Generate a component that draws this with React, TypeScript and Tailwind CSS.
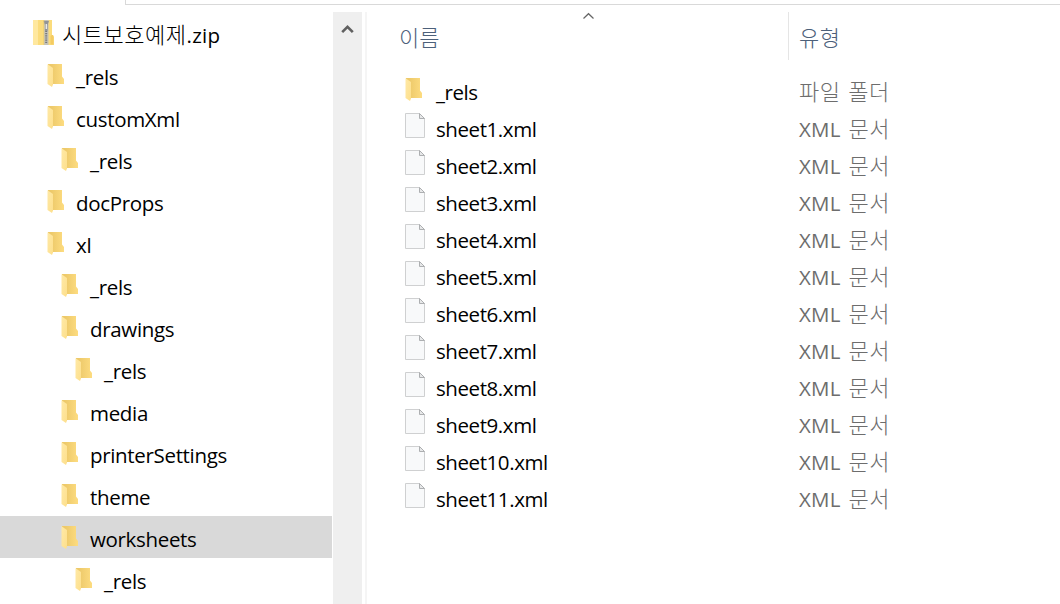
import clsx from "clsx";

type TreeItem = { label: string; level: number; selected?: boolean };

const tree: TreeItem[] = [
  { label: "_rels", level: 1 },
  { label: "customXml", level: 1 },
  { label: "_rels", level: 2 },
  { label: "docProps", level: 1 },
  { label: "xl", level: 1 },
  { label: "_rels", level: 2 },
  { label: "drawings", level: 2 },
  { label: "_rels", level: 3 },
  { label: "media", level: 2 },
  { label: "printerSettings", level: 2 },
  { label: "theme", level: 2 },
  { label: "worksheets", level: 2, selected: true },
  { label: "_rels", level: 3 },
];

const indents = ["pl-8", "pl-[46px]", "pl-[60px]", "pl-[74px]"];

const sheets = Array.from({ length: 11 }, (_, i) => `sheet${i + 1}.xml`);

const latin = "font-['Open_Sans','Noto_Sans_CJK_KR',sans-serif] text-[20.5px]";
const korean = "font-['Noto_Sans_CJK_KR',sans-serif] text-[22px] font-light";

function FolderIcon() {
  return (
    <svg width="24" height="28" viewBox="0 0 24 28" className="shrink-0">
      <defs>
        <linearGradient id="folder-back" x1="0" x2="1">
          <stop offset="0.2" stopColor="#edc96a" />
          <stop offset="1" stopColor="#fddc80" />
        </linearGradient>
        <linearGradient id="folder-front" x1="0" x2="1" y1="0" y2="1">
          <stop offset="0" stopColor="#ffe9a6" />
          <stop offset="1" stopColor="#fddf8c" />
        </linearGradient>
      </defs>
      <path d="M2 2H16V14.5L18 17V22H2Z" fill="url(#folder-back)" />
      <path d="M1.5 2.2L7 6V22.4L6 25L1.5 22Z" fill="url(#folder-front)" />
    </svg>
  );
}

function ZipIcon() {
  return (
    <svg width="24" height="28" viewBox="0 0 24 28" className="shrink-0">
      <path d="M1 1H20V16H21L22 18V26H1Z" fill="#fbdc7c" />
      <path d="M1 1H6V26H1Z" fill="#ffe89f" />
      <path d="M18.5 17L20 16H21L21.5 18V25.5H18.5Z" fill="#f4cb63" />
      <path d="M12 1H16.5V26H12Z" fill="#c5c3b8" />
      <path d="M14.2 3V24" stroke="#77777a" strokeWidth="2" strokeDasharray="1.2 1" />
      <path d="M11.5 2H17L15.5 6V12H13V6Z" fill="#929497" />
      <path d="M13.6 5H15V10H13.6Z" fill="#e9e9e7" />
      <path d="M11.8 1V26" stroke="#e4c872" strokeWidth="0.7" />
    </svg>
  );
}

function FileIcon() {
  return (
    <svg width="24" height="28" viewBox="0 0 24 28" className="shrink-0">
      <path d="M1.5 2.5H15.5L20.5 7.5V26.5H1.5Z" fill="#f8f9fa" stroke="#cfd0d1" />
      <path d="M15.5 2.5V7.5H20.5Z" fill="#e7e8e9" stroke="#adafb1" />
    </svg>
  );
}

function FolderTree() {
  return (
    <nav className={clsx("w-[332px] shrink-0 pt-3 tracking-[-0.33px] text-black", latin)}>
      <div className="flex h-[42px] pl-8">
        <div className="pt-[7px]">
          <ZipIcon />
        </div>
        <span className="flex pl-1.5 whitespace-nowrap">
          <span className={clsx(korean, "leading-[43px] tracking-[0.5px]")}>시트보호예제</span>
          <span className="leading-[46px] tracking-[0.3px]">.zip</span>
        </span>
      </div>
      {tree.map((item, i) => (
        <div key={i} className={clsx("flex h-[42px]", indents[item.level], item.selected && "bg-[#d9d9d9]")}>
          <div className="pt-2">
            <FolderIcon />
          </div>
          <span className="pl-1.5 leading-[46px]">{item.label}</span>
        </div>
      ))}
    </nav>
  );
}

function Scrollbar() {
  return (
    <div className="mt-3 ml-px flex w-[29px] shrink-0 justify-center bg-[#efefef] pt-3">
      <svg width="13" height="10" viewBox="0 0 13 10">
        <path d="M1.2 8.2L6.5 2.8L11.8 8.2" fill="none" stroke="#606060" strokeWidth="2.6" />
      </svg>
    </div>
  );
}

function FileList() {
  return (
    <main className="relative flex-1 pt-3">
      <svg width="13" height="8" viewBox="0 0 13 8" className="absolute top-3 left-[214px]">
        <path d="M1.5 6.5L6.5 1.7L11.5 6.5" fill="none" stroke="#666" strokeWidth="1.2" />
      </svg>
      <div className={clsx("flex h-12 leading-[49px] text-[#4c607a]", korean)}>
        <span className="w-[421px] border-r border-[#e5e5e5] pl-[31px]">이름</span>
        <span className="pl-2.5 tracking-[0.5px]">유형</span>
      </div>
      <div className="pt-3.5">
        {["_rels", ...sheets].map((name, i) => (
          <div key={name} className="flex h-[37px]">
            <div className={clsx("w-[67px] pl-9", i === 0 && "pt-0.5")}>
              {i === 0 ? <FolderIcon /> : <FileIcon />}
            </div>
            <span className={clsx("w-[364px] pl-px leading-[37px] tracking-[-0.42px] text-black", latin)}>{name}</span>
            {i === 0 ? (
              <span className={clsx("leading-[33px] tracking-[0.5px] text-[#6d6d6d] [word-spacing:2.5px]", korean)}>파일 폴더</span>
            ) : (
              <span className="flex gap-2 text-[#6d6d6d]">
                <span className={clsx("leading-[37px] tracking-[0.2px]", latin)}>XML</span>
                <span className={clsx("leading-[33px] tracking-[0.5px]", korean)}>문서</span>
              </span>
            )}
          </div>
        ))}
      </div>
    </main>
  );
}

export default function App() {
  return (
    <div className="relative flex h-[604px] w-[1060px] overflow-hidden bg-white">
      <div className="absolute top-0 right-0 left-[125px] h-[5px] border-b border-l border-[#d9d9d9]" />
      <FolderTree />
      <Scrollbar />
      <div className="mt-3 mr-px ml-[3px] w-0.5 shrink-0 bg-[#f5f5f5]" />
      <FileList />
    </div>
  );
}
